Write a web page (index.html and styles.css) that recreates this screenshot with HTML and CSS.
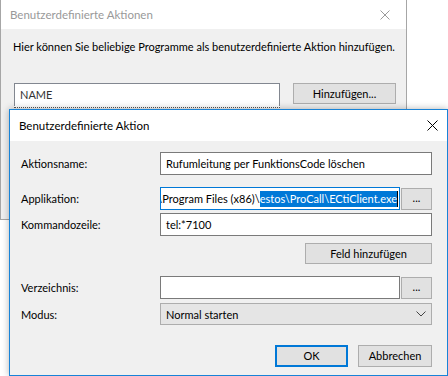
FILE: index.html
```html
<!DOCTYPE html>
<html lang="de">
<head>
    <meta charset="UTF-8">
    <title>Benutzerdefinierte Aktion</title>
    <link rel="stylesheet" href="styles.css">
</head>
<body>
    <!-- Hintergrundfenster: Liste der Aktionen -->
    <div class="window window-back">
        <div class="titlebar">
            <span class="title">Benutzerdefinierte Aktionen</span>
            <svg class="close" width="10" height="10" viewBox="0 0 10 10">
                <path d="M0.5 0.5 L9.5 9.5 M9.5 0.5 L0.5 9.5" stroke="#9a9a9a" stroke-width="1" fill="none"/>
            </svg>
        </div>
        <div class="back-body">
            <p class="intro">Hier können Sie beliebige Programme als benutzerdefinierte Aktion hinzufügen.</p>
            <div class="list-row">
                <div class="list">
                    <div class="list-header">NAME</div>
                    <div class="list-focus"></div>
                </div>
                <div class="btn btn-add">Hinzufügen...</div>
            </div>
        </div>
    </div>

    <!-- Vordergrund-Dialog -->
    <div class="window window-front">
        <div class="titlebar titlebar-front">
            <span class="title">Benutzerdefinierte Aktion</span>
            <svg class="close" width="11" height="11" viewBox="0 0 11 11">
                <path d="M0.5 0.5 L10.5 10.5 M10.5 0.5 L0.5 10.5" stroke="#000" stroke-width="1" fill="none"/>
            </svg>
        </div>
        <div class="dialog-body">
            <div class="row row-name">
                <label>Aktionsname:</label>
                <div class="edit">Rufumleitung per FunktionsCode löschen</div>
            </div>
            <div class="row row-app">
                <label>Applikation:</label>
                <div class="edit edit-focus"><span>C:\Program Files (x86)\</span><span class="sel">estos\ProCall\ECtiClient.exe</span><span class="caret"></span></div>
                <div class="btn btn-dots">...</div>
            </div>
            <div class="row row-cmd">
                <label>Kommandozeile:</label>
                <div class="edit">tel:*7100</div>
            </div>
            <div class="row row-field">
                <div class="btn btn-field">Feld hinzufügen</div>
            </div>
            <div class="row row-dir">
                <label>Verzeichnis:</label>
                <div class="edit"></div>
                <div class="btn btn-dots">...</div>
            </div>
            <div class="row row-mode">
                <label>Modus:</label>
                <div class="combo">
                    <span>Normal starten</span>
                    <svg width="10" height="6" viewBox="0 0 10 6">
                        <path d="M0.5 0.5 L5 5 L9.5 0.5" stroke="#444" stroke-width="1" fill="none"/>
                    </svg>
                </div>
            </div>
            <div class="row row-buttons">
                <div class="btn btn-ok">OK</div>
                <div class="btn btn-cancel">Abbrechen</div>
            </div>
        </div>
    </div>
</body>
</html>
```

FILE: styles.css
```css
body, html {
    margin: 0;
    padding: 0;
    font-family: Lato, "Liberation Sans", sans-serif;
    font-size: 11px;
    color: #000;
    background-color: #ffffff;
}

body {
    position: relative;
    width: 448px;
    height: 376px;
    overflow: hidden;
}

.window {
    position: absolute;
    box-sizing: border-box;
    background-color: #f0f0f0;
}

.window-back {
    left: 0;
    top: 0;
    width: 407px;
    height: 220px;
    border: 1px solid #a6a6a6;
    border-top: none;
}

.window-front {
    left: 9px;
    top: 109px;
    width: 439px;
    height: 267px;
    border: 1px solid #1883d7;
    box-shadow: 0 0 7px rgba(0, 0, 0, 0.3);
}

.titlebar {
    height: 29px;
    background-color: #ffffff;
    display: flex;
    align-items: center;
    justify-content: space-between;
    padding: 0 16px 0 9px;
    font-size: 11.5px;
}

.titlebar .title {
    color: #999999;
}

.titlebar-front {
    height: 31px;
    padding: 0 9px 0 9px;
}

.titlebar-front .title {
    color: #000;
}

.back-body {
    padding: 10px 0 0 12px;
}

.intro {
    margin: 0;
    line-height: 16px;
    white-space: nowrap;
}

.list-row {
    display: flex;
    align-items: flex-start;
    margin-top: 28px;
}

.list {
    margin-left: 1px;
    width: 266px;
}

.list-header {
    box-sizing: border-box;
    height: 23px;
    line-height: 21px;
    background-color: #fff;
    border: 1px solid #828790;
    border-bottom: none;
    padding-left: 5px;
    color: #333;
}

.list-focus {
    height: 1px;
    border-bottom: 1px dotted #555;
    background: #fff;
}

.btn {
    box-sizing: border-box;
    background-color: #e1e1e1;
    border: 1px solid #adadad;
    text-align: center;
    white-space: nowrap;
}

.btn-add {
    width: 103px;
    height: 21px;
    line-height: 19px;
    margin-left: 13px;
}

.dialog-body {
    padding: 11px 15px 0 11px;
}

.row {
    display: flex;
    align-items: center;
}

.row label {
    width: 139px;
    flex-shrink: 0;
}

.edit {
    box-sizing: border-box;
    flex: 1;
    min-width: 0;
    height: 23px;
    line-height: 21px;
    background-color: #fff;
    border: 1px solid #7a7a7a;
    padding-left: 5px;
    white-space: nowrap;
    overflow: hidden;
}

.edit-focus {
    border-color: #0078d7;
    display: flex;
    align-items: center;
    justify-content: flex-end;
    padding: 0 1px 0 0;
}

.sel {
    background-color: #0078d7;
    color: #fff;
    line-height: 16px;
}

.caret {
    width: 1px;
    height: 16px;
    flex-shrink: 0;
    background-color: #000;
}

.btn-dots {
    width: 31px;
    height: 22px;
    line-height: 18px;
    margin-left: 1px;
    flex-shrink: 0;
}

.row-app {
    margin-top: 12px;
}

.row-cmd {
    margin-top: 3px;
}

.row-field {
    margin-top: 7px;
    justify-content: flex-end;
}

.btn-field {
    width: 127px;
    height: 21px;
    line-height: 19px;
}

.row-dir {
    margin-top: 12px;
}

.row-mode {
    margin-top: 4px;
}

.combo {
    box-sizing: border-box;
    flex: 1;
    height: 22px;
    display: flex;
    align-items: center;
    justify-content: space-between;
    padding: 0 5px 0 5px;
    background-color: #e5e5e5;
    border: 1px solid #adadad;
}

.row-buttons {
    margin-top: 20px;
    justify-content: flex-end;
}

.btn-ok {
    width: 73px;
    height: 22px;
    line-height: 18px;
    border: 2px solid #0078d7;
}

.btn-cancel {
    width: 74px;
    height: 22px;
    line-height: 20px;
    margin-left: 10px;
}
```
